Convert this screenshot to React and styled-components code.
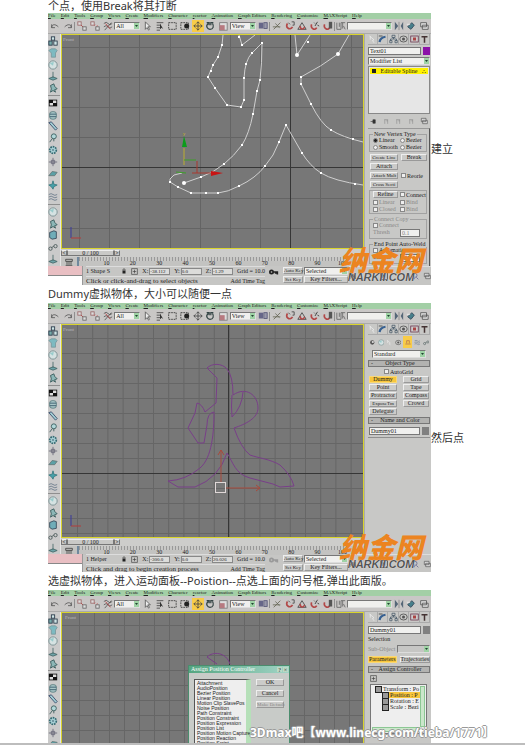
import React from 'react';
import styled, { createGlobalStyle, css } from 'styled-components';

const GlobalStyle = createGlobalStyle`
  * { box-sizing: border-box; }
  body {
    margin: 0;
    background: #fff;
    color: #333;
    font-family: "Noto Sans", "Noto Sans CJK SC", sans-serif;
    font-size: 11px;
  }
  button, input, select {
    font: inherit;
    color: inherit;
    margin: 0;
    padding: 0;
    border: 0;
    border-radius: 0;
    background: none;
    min-width: 0;
  }
`;

// ---------- article ----------

const Page = styled.main`
  overflow: hidden;
  border-bottom: 2px solid #bdbdbd;
`;

const Article = styled.article`
  padding-left: 48px;
`;

const Line = styled.p`
  margin: 0;
  padding-bottom: ${p => (p.$first ? '1px' : '0')};
  line-height: ${p => (p.$first ? '12px' : '18px')};
  white-space: nowrap;
`;

const Row = styled.div`
  display: flex;
  position: relative;
  line-height: 14px;
  height: ${p => p.$crop || 'auto'};
  overflow: ${p => (p.$crop ? 'hidden' : 'visible')};
  align-items: ${p => (p.$crop ? 'flex-start' : 'center')};
`;

const Credit = styled.span`
  position: absolute;
  left: 202px;
  bottom: 3px;
  color: #fff;
  font-size: 12px;
  font-weight: bold;
  white-space: nowrap;
  text-shadow: 1px 0 #999, -1px 0 #999, 0 1px #999, 0 -1px #999;
`;

// ---------- application window ----------

const Window = styled.section`
  position: relative;
  flex: 0 1 383px;
  min-width: 0;
  overflow: hidden;
  background: #c6c6c4;
  color: #222;
  font-family: "Liberation Serif", serif;
  font-size: 6px;
  line-height: 6px;
`;

const MenuBar = styled.nav`
  display: flex;
  gap: 5px;
  height: 6px;
  background: #a3cfa6;
  font-size: 5px;
  overflow: hidden;
  white-space: nowrap;
`;

const MenuItem = styled.button`
  line-height: 6px;
  &::first-letter { text-decoration: underline; }
`;

const ToolBar = styled.div`
  display: flex;
  align-items: center;
  justify-content: space-between;
  height: ${p => p.$height};
  padding: 0 1px;
  border-bottom: 1px solid #aaa;
  background: #c9c7c6;
`;

const ToolButton = styled.button`
  display: flex;
  align-items: center;
  justify-content: center;
  flex: none;
  width: ${p => p.$width || '12px'};
  height: 12px;
  color: ${p => (p.$dim ? '#999' : 'inherit')};
  background: ${p => (p.$on ? '#f8cc48' : 'none')};
`;

const Divider = styled.span`
  flex: none;
  width: ${p => (p.$flat ? 'auto' : '1px')};
  height: ${p => (p.$flat ? '1px' : '9px')};
  background: #8f8f8f;
`;

const DropWrap = styled.span`
  display: flex;
  flex: ${p => (p.$width ? 'none' : '1')};
  width: ${p => p.$width || 'auto'};
  height: 8px;
  min-width: 0;
  border: 1px solid #777;
  border-right-color: #ddd;
  border-bottom-color: #ddd;
  background: ${p => (p.$dim ? '#c6c6c4' : '#f0f0ee')};
`;

const DropSelect = styled.select`
  appearance: none;
  flex: 1;
  padding-left: 1px;
  line-height: 6px;
`;

const DropArrow = styled.svg`
  flex: none;
  width: 5px;
  height: 6px;
  background: #9fd3a5;
`;

const Body = styled.div`
  display: grid;
  grid-template-columns: 13px minmax(0, 1fr) 67px;
  height: ${p => p.$height};
`;

const SideBar = styled.div`
  display: flex;
  flex-direction: column;
  justify-content: space-between;
  padding: 2px 0;
  overflow: hidden;
  border-right: 1px solid #e4e4e4;
  background: #cacaca;
  button { width: 10px; height: 10px; }
`;

const Center = styled.div`
  display: flex;
  flex-direction: column;
  min-width: 0;
`;

const Viewport = styled.div`
  flex: 1;
  min-height: 0;
  border: 1px solid #d9d42c;
  background: #777;
  svg { display: block; width: 100%; height: 100%; }
`;

const TimeSlider = styled.div`
  display: flex;
  height: 8px;
  padding: 1px 0;
  background: #cdcdcb;
`;

const Thumb = styled.button`
  width: ${p => p.$width};
  border: 1px solid #777;
  border-top-color: #eee;
  background: #c9c9c7;
  line-height: 4px;
`;

const Ruler = styled.div`
  display: flex;
  height: 9px;
  background: #c3c3c1;
`;

const RulerKey = styled.button`
  display: flex;
  align-items: center;
  justify-content: center;
  width: 18px;
  border-right: 2px solid #71889d;
`;

const Ticks = styled.div`
  display: grid;
  grid-template-columns: repeat(10, 1fr);
  flex: 0 1 268px;
  padding: 4px 0 0 4px;
  text-align: right;
  line-height: 5px;
  background: repeating-linear-gradient(90deg, #999 0 1px, #c8c8c6 1px 3px) 0 0 / 100% 4px no-repeat;
`;

const StatusBar = styled.footer`
  display: grid;
  grid-template-columns: 34px minmax(0, 1fr) 17px 67px 82px;
  height: ${p => p.$height};
  overflow: hidden;
  white-space: nowrap;
`;

const Listener = styled.div`
  display: grid;
  grid-template-rows: 1fr 1fr;
  gap: 1px;
  background: #888;
  input { width: 100%; background: #fff; }
  input:first-child { background: #e9bfc3; }
`;

const StatusCell = styled.div`
  display: grid;
  grid-template-rows: 1fr 1fr;
  min-width: 0;
  padding-left: 3px;
  border-left: 1px solid #999;
`;

const StatusLine = styled.div`
  display: flex;
  align-items: center;
  gap: 4px;
  min-width: 0;
  border-top: 1px solid #ddd;
`;

const Grow = styled.span`
  flex: 1;
  font-size: ${p => (p.$hint ? '7px' : 'inherit')};
`;

const Coord = styled.label`
  display: flex;
  align-items: center;
  gap: 1px;
  input {
    width: 21px;
    height: 7px;
    border: 1px solid #888;
    background: #dcdcda;
    font-size: 5px;
  }
`;

const KeyCell = styled.div`
  display: grid;
  grid-template-columns: 20px minmax(0, 1fr);
  grid-template-rows: 1fr 1fr;
  gap: 1px;
  padding: 1px;
`;

const Logo = styled.div`
  position: absolute;
  right: 8px;
  bottom: 3px;
  display: flex;
  flex-direction: column;
  color: #ec8420;
  font-family: "Noto Sans CJK SC", sans-serif;
  font-size: 28px;
  font-weight: 900;
  font-style: italic;
  line-height: 27px;
  white-space: nowrap;
`;

const LogoSite = styled.span`
  color: #555;
  font-family: "Liberation Sans", sans-serif;
  font-size: 11px;
  font-weight: bold;
  line-height: 9px;
  text-align: center;
  text-shadow: 0 0 1px #fff;
`;

// ---------- command panel ----------

const Panel = styled.aside`
  display: flex;
  flex-direction: column;
  gap: ${p => p.$gap || '2px'};
  min-width: 0;
  padding: 0 1px 0 3px;
  overflow: hidden;
  border-left: 1px solid #aaa;
  background: #c8c8c6;
`;

const PanelRow = styled.div`
  display: flex;
  align-items: center;
  justify-content: space-between;
  gap: 2px;
  flex: none;
  height: ${p => p.$height || '9px'};
  padding: 0 ${p => p.$inset || '0px'};
`;

const TabRow = styled(PanelRow)`
  gap: 0;
  height: 11px;
  border-bottom: 1px solid #aaa;
  button { width: 10px; height: 10px; border-right: 1px solid #aaa; }
`;

const NameField = styled.input`
  flex: 1;
  width: 20px;
  height: 8px;
  padding-left: 1px;
  border: 1px solid #777;
  background: #f0f0ee;
`;

const Swatch = styled.button`
  width: 7px;
  height: 8px;
  background: ${p => p.$color};
`;

const Stack = styled.div`
  flex: none;
  height: 48px;
  padding: 1px;
  border: 1px solid #888;
  background: #e6e6e6;
`;

const StackItem = styled.button`
  display: flex;
  justify-content: space-between;
  align-items: center;
  width: 100%;
  height: 6px;
  padding: 0 2px;
  background: #fff200;
  line-height: 6px;
  i { width: 4px; height: 4px; background: #222; }
`;

const Rollout = styled.div`
  display: flex;
  flex-direction: column;
  gap: 2px;
  flex: 1;
  min-height: 0;
  padding: 2px 2px 0 1px;
  border-top: 1px solid #999;
  border-right: 1px solid #555;
`;

const Group = styled.fieldset`
  display: grid;
  grid-template-columns: 1fr 1fr;
  gap: 1px 2px;
  flex: none;
  min-width: 0;
  margin: 0;
  padding: 0 1px 1px 3px;
  border: 1px solid #a2a2a2;
  color: ${p => (p.$dim ? '#888' : 'inherit')};
  legend { padding: 0 1px; line-height: 6px; white-space: nowrap; }
`;

const Choice = styled.label`
  display: flex;
  align-items: center;
  gap: 1px;
  min-width: 0;
  white-space: nowrap;
  line-height: 6px;
  grid-column: ${p => (p.$wide ? 'span 2' : 'auto')};
  color: ${p => (p.$dim ? '#888' : 'inherit')};
  input {
    appearance: none;
    flex: none;
    width: 5px;
    height: 5px;
    border: 1px solid #888;
    background: #eee;
  }
  input[type='radio'] { border-radius: 50%; }
  input:checked { background: #222; }
`;

const PushGrid = styled.div`
  display: grid;
  grid-template-columns: 28px 26px;
  justify-content: space-between;
  gap: ${p => p.$gap || '2px 3px'};
  padding: 0 1px;
`;

const pushed = css`
  background: #f8c63c;
  border-color: #f8d878;
`;

const Push = styled.button`
  height: 7px;
  border: 1px solid #999;
  border-top-color: #eee;
  border-left-color: #eee;
  background: #cbcbc9;
  font-size: ${p => (p.$small ? '5px' : '6px')};
  line-height: 5px;
  text-align: center;
  white-space: nowrap;
  ${p => p.$on && pushed}
  &:disabled { color: #888; }
`;

const Header = styled.button`
  display: flex;
  flex: none;
  height: 7px;
  border: 1px solid #777;
  background: #b2b2b0;
  line-height: 5px;
  text-align: center;
  padding: 0 2px;
  span { flex: 1; }
`;

const Tree = styled.ul`
  display: grid;
  grid-template-columns: minmax(0, 1fr) 5px;
  grid-template-rows: repeat(4, 6px) 1fr 5px;
  flex: none;
  height: 50px;
  margin: 0 3px 0 2px;
  padding: 1px;
  border: 1px solid #777;
  background: #eee;
  list-style: none;
`;

const TreeItem = styled.li`
  display: flex;
  align-items: center;
  grid-column: 1;
  margin-left: ${p => (p.$root ? '3px' : '10px')};
  background: ${p => (p.$on ? '#f8c63c' : 'none')};
  white-space: nowrap;
  &::before {
    content: '';
    width: 5px;
    height: 5px;
    margin-right: 1px;
    border: 1px solid #222;
    background: #999;
  }
`;

const Scroll = styled.li`
  grid-column: ${p => (p.$wide ? '1' : '2')};
  grid-row: ${p => (p.$wide ? '6' : '1 / 6')};
  border: 1px solid #8cc794;
  background: #cbe7cb;
`;

// ---------- assign dialog ----------

const Stage = styled.div`
  position: relative;
  display: flex;
  flex: 1;
  min-height: 0;
`;

const Dialog = styled.div`
  position: absolute;
  left: 127px;
  top: 53px;
  width: 102px;
  height: 100px;
  border: 1px solid #4b8d6e;
  background: #c8cbc8;
`;

const DialogTitle = styled.div`
  display: flex;
  justify-content: space-between;
  height: 7px;
  padding: 0 1px 0 2px;
  background: linear-gradient(90deg, #54a681, #a2d4c6);
  color: #fff;
  button { width: 5px; height: 5px; margin: 1px 0 0 1px; background: #bcd9c5; color: #222; line-height: 4px; }
`;

const DialogBody = styled.div`
  display: grid;
  grid-template-columns: 57px 28px;
  gap: 5px;
  padding: 6px 5px;
`;

const ControllerList = styled.ul`
  height: 80px;
  margin: 0;
  padding: 1px 2px;
  border: 1px solid #555;
  border-right: 5px solid #b6e0b9;
  background: #eee;
  font-family: "Liberation Sans", sans-serif;
  font-size: 5px;
  line-height: 5px;
  list-style: none;
  white-space: nowrap;
`;

const DialogButtons = styled.div`
  display: flex;
  flex-direction: column;
  gap: 4px;
`;

// ---------- icons ----------

const art = {
  undo: <path d="M2 8C2 4 6 3 10 7M2 4v4h4" stroke="#555" />,
  redo: <path d="M10 8C10 4 6 3 2 7M10 4v4H6" stroke="#555" />,
  link: <><path d="M4 4l5 5" stroke="#b33" /><rect x="1" y="1" width="4" height="4" fill="#ddd" stroke="#966" /><rect x="7" y="7" width="4" height="4" fill="#ddd" stroke="#666" /></>,
  unlink: <><path d="M5 6l1-2M7 9l2-4" stroke="#c66" /><rect x="1" y="1" width="4" height="4" fill="#ddd" stroke="#966" /><rect x="7" y="7" width="4" height="4" fill="#ddd" stroke="#666" /></>,
  bind: <><path d="M1 3q3-3 5 0t5 0M1 7q3-3 5 0t5 0M2 11l8-9" stroke="#555" /><path d="M3 3l6 7" stroke="#b44" /></>,
  pick: <path d="M4 1v9l2-2 2 3 1-1-2-3h3z" fill="#eee" stroke="#555" />,
  list: <><path d="M2 2h8M2 5h5M2 8h5M2 11h4" stroke="#444" /><path d="M6 3v7l2-2 2 2z" fill="#333" /></>,
  rect: <rect x="2" y="2" width="9" height="8" stroke="#333" strokeDasharray="2 1" />,
  region: <><rect x="1" y="2" width="9" height="8" stroke="#333" strokeDasharray="2 1" /><circle cx="8" cy="6" r="3" fill="#222" /></>,
  move: <path d="M6 1v10M1 6h10M4 3l2-2 2 2M4 9l2 2 2-2M3 4L1 6l2 2M9 4l2 2-2 2" stroke="#444" />,
  rotate: <path d="M4 3C0 6 3 10 6 10C10 10 11 6 9 3M2 2h3v3M7 5V2h3" stroke="#344" strokeWidth="1.500" />,
  scale: <><rect x="2" y="2" width="9" height="9" fill="#ddd" stroke="#777" /><rect x="2" y="5" width="6" height="6" fill="#b77a80" /></>,
  pivot: <><rect x="1" y="2" width="5" height="7" fill="#668" /><rect x="7" y="2" width="4" height="7" fill="#99a" stroke="#557" /></>,
  wand: <path d="M2 10l8-8M4 3l5 5M1 7h9" stroke="#665" />,
  snap: <><path d="M3 3C0 8 6 12 9 7" stroke="#b24848" strokeWidth="2" /><path d="M6 4L4 2M8 1h3v4H9" stroke="#444" /></>,
  angle: <><path d="M1 10L6 2l5 8z" stroke="#444" /><path d="M4 6C3 10 8 11 9 7" stroke="#b24848" strokeWidth="2" /></>,
  percent: <><path d="M2 4C0 9 6 12 8 8" stroke="#b24848" strokeWidth="2" /><path d="M5 2l1 1M9 1L6 6M9 5l2 1" stroke="#333" /></>,
  spin: <><path d="M2 4C0 9 6 12 8 8" stroke="#b24848" strokeWidth="2" /><rect x="7" y="1" width="4" height="8" fill="#555" /></>,
  sets: <path d="M1 2v8h5V2M4 2v5M8 2v7M6 2h5M9 6l2 4" stroke="#666" />,
  mirror: <><path d="M1 1v10l4-5zM11 1v10L8 6z" fill="#567" /><path d="M6 1v10" stroke="#888" /></>,
  align: <><path d="M2 7l5-5 3 3-4 5z" fill="#477f8b" stroke="#345" /><path d="M1 4h4" stroke="#eee" /></>,
  layers: <path d="M2 2h7v5H2zM4 5h7v5H4z" fill="#ddd" stroke="#555" />,
  cubes: <><rect x="4" y="1" width="4" height="4" fill="#cfe5e5" stroke="#234" /><rect x="1" y="6" width="4" height="5" fill="#7aa" stroke="#234" /><rect x="7" y="6" width="4" height="5" fill="#cfe5e5" stroke="#234" /></>,
  shirt: <path d="M1 3l3-2h5l2 2-2 3v5H4V6z" fill="#7dbac1" stroke="#78979b" />,
  ball: <><circle cx="6" cy="6" r="5" fill="#d5e2e2" stroke="#71898c" /><path d="M2 4l5-2-1 5z" fill="#9cc" /></>,
  stand: <path d="M6 1v7M1 9l5-2 5 2-5 2z" fill="#6fa3a8" stroke="#466" />,
  figure: <path d="M3 3l4-2 1 3 3 3-3 1 1 3-3-2-3 2 1-4z" fill="#8cb7b7" stroke="#355" />,
  checks: <><rect x="1" y="2" width="10" height="8" fill="#111" /><rect x="6" y="3" width="4" height="3" fill="#ddd" /><rect x="2" y="6" width="4" height="3" fill="#ddd" /></>,
  coil: <><rect x="2" y="2" width="8" height="9" rx="3" fill="#a8c6c7" stroke="#55797c" /><path d="M2 5h8M2 8h8" stroke="#356" /></>,
  tube: <path d="M1 2l3-1 7 8-2 2z" fill="#a1cdd2" stroke="#346" />,
  lamp: <><circle cx="7" cy="4" r="3" fill="#b1d7d9" stroke="#355" /><path d="M5 7l-3 4M7 7v3" stroke="#355" /></>,
  gear: <><circle cx="6" cy="6" r="4" fill="#a6cfd4" stroke="#356b73" strokeWidth="2" strokeDasharray="2 1" /><circle cx="6" cy="6" r="1" fill="#356" /></>,
  cross: <path d="M6 1v10M1 6h10M4 4h4v4H4z" stroke="#667" />,
  fan: <path d="M1 8l4-5 6 1-3 4z" fill="#5ba0a6" stroke="#677" />,
  star: <path d="M6 1l1 4 4 1-4 2-1 3-2-3-3-2 4-1z" fill="#45a1aa" stroke="#377a80" />,
  waves: <path d="M1 3q3-2 5 0t5 0M1 6q3-2 5 0t5 0M1 9q3-2 5 0t5 0" stroke="#678" />,
  box: <path d="M2 3l5-2 3 1v8l-5 1-3-2z" fill="#6fadb8" stroke="#345" />,
  glasses: <path d="M1 8a2 2 0 1 0 4 0 2 2 0 1 0-4 0M7 5a2 2 0 1 0 4 0 2 2 0 1 0-4 0M4 7l3-2" stroke="#455" />,
  create: <path d="M2 2l6 5-2 1 2 3M3 2v5" stroke="#eee" />,
  modify: <><path d="M2 10Q3 4 10 3" stroke="#376091" strokeWidth="3" /><path d="M1 2h5" stroke="#333" /></>,
  tree: <path d="M4 1h4v3H4zM1 8h3v3H1zM8 8h3v3H8zM6 4v2M2 8V6h8v2" stroke="#456" />,
  wheel: <><ellipse cx="6" cy="6" rx="5" ry="4" stroke="#444" /><circle cx="6" cy="6" r="2" fill="#555" /></>,
  monitor: <><rect x="1" y="2" width="10" height="8" fill="#ccc" stroke="#632b45" /><rect x="4" y="4" width="4" height="4" fill="#a44" /></>,
  hammer: <path d="M2 2h8v2H7v7H5V4H2z" fill="#433" />,
  dot: <><circle cx="6" cy="6" r="4" fill="#555" /><circle cx="7" cy="5" r="2" fill="#ddd" /></>,
  tape: <path d="M2 9h8M4 8V4h4v4" stroke="#a65" />,
  pin: <path d="M1 6h5M5 3v6h4V3z" fill="#333" stroke="#333" />,
  pipe: <path d="M3 2v8M8 2v8M3 3h4v3" stroke="#888" />,
  lock: <><rect x="3" y="5" width="6" height="6" fill="#222" /><path d="M4 5V2h4v3" stroke="#222" /></>,
  plus: <path d="M1 1h10v10H1zM6 3v6M3 6h6" stroke="#333" />,
  key: <><circle cx="3" cy="6" r="2" stroke="currentColor" strokeWidth="2" /><path d="M5 6h6M10 6v3M8 6v2" stroke="currentColor" strokeWidth="2" /></>,
  curve: <><path d="M1 2h10v3H1zM3 5v5M6 5v5M9 5v5" stroke="#222" /><path d="M1 11h10" stroke="#222" /></>,
  back: <path d="M2 2v8M11 2v8L7 6zM7 2v8L3 6z" fill="#333" stroke="#333" />,
  play: <><rect x="1" y="1" width="10" height="10" fill="#bbb" stroke="#333" /><path d="M4 3v6l4-3z" fill="#222" /></>,
  zoom: <><circle cx="6" cy="5" r="3" stroke="#558" /><path d="M8 8l3 3M1 10h5" stroke="#558" /></>,
};

const Icon = ({ name, size = 10 }) => (
  <svg width={size} height={size} viewBox="0 0 12 12" fill="none" aria-hidden="true">{art[name]}</svg>
);

const Tool = ({ name, ...rest }) => (
  <ToolButton aria-label={name} {...rest}><Icon name={name} /></ToolButton>
);

const Drop = ({ label, value, width, dim }) => (
  <DropWrap $width={width} $dim={dim}>
    <DropSelect aria-label={label} defaultValue={value}>
      <option>{value}</option>
    </DropSelect>
    <DropArrow viewBox="0 0 5 6"><path d="M1 2h3L2.500 4z" fill="#243" /></DropArrow>
  </DropWrap>
);

// ---------- viewports ----------

const range = (from, to, step) => {
  const out = [];
  for (let n = from; n < to; n += step) out.push(n);
  return out;
};

const Grid = ({ xs, ys, box, major, minor = '#646464' }) => {
  const [x, y, w, h] = box;
  return (
    <>
      <path d={xs.map(n => `M${n} ${y}v${h}`).join('') + ys.map(n => `M${x} ${n}h${w}`).join('')} stroke={minor} strokeWidth="1" />
      <path d={`M${major[0]} ${y}v${h}` + (major[1] ? `M${x} ${major[1]}h${w}` : '')} stroke="#363636" />
    </>
  );
};

const Tripod = ({ y }) => (
  <g fill="none">
    <path d={`M71 ${y}v-11`} stroke="#3a3a9c" />
    <path d={`M71 ${y}h10`} stroke="#b23c3c" />
  </g>
);

const knots = [
  [222, 45], [218, 57], [213, 65], [211, 71], [208, 77], [215, 88], [227, 105], [241, 107], [244, 100], [244, 78],
  [246, 64], [252, 53], [262, 43], [260, 80], [257, 91], [253, 114], [242, 145], [224, 164], [201, 177], [239, 37],
  [242, 45], [308, 42], [301, 77], [301, 84], [311, 104], [331, 130], [353, 139], [286, 125], [279, 142], [265, 166],
  [239, 186], [218, 193], [206, 193], [191, 193], [178, 187], [170, 182], [302, 153], [321, 173], [355, 184],
];

const SplineScene = () => (
  <svg viewBox="62 35 301 213" preserveAspectRatio="none" fill="none">
    <Grid box={[62, 35, 301, 213]} xs={[79.500, 109.500, 139.500, 170.500, 200.500, 230.500, 260.500, 320.500, 351.500]} ys={[47.500, 77.500, 107.500, 137.500, 198.500, 228.500]} major={[290.500, 167.500]} />
    <text x="63" y="41" fill="#bbb" fontSize="5">Front</text>
    <g stroke="#cfcfcf">
      <path d="M223 35L222 45L218 57L213 65L208 77L215 88L227 105L241 107L244 100L244 78Q245 60 252 53L262 43Q262 64 260 80L257 91L253 114Q249 134 242 145Q234 156 224 164Q213 173 201 177L184 183" />
      <path d="M239 35L242 45L255 35M295 35L297 55L310 35M349 35L338 54Q322 66 301 77V84L311 104Q321 124 331 130Q342 137 363 142" />
      <path d="M363 185Q334 181 321 173Q310 166 302 153L286 125L279 142Q274 156 265 166Q256 178 239 186Q228 192 218 193H191L178 187L170 182V179L174 175L182 173" />
    </g>
    <g fill="#fff">
      {knots.map(([x, y]) => <rect key={x + '-' + y} x={x - 1} y={y - 1} width="2" height="2" />)}
      <circle cx="184" cy="183" r="2" />
      <circle cx="297" cy="55" r="2" />
      <circle cx="338" cy="54" r="2" />
    </g>
    <path d="M184 148v17" stroke="#bdae30" />
    <path d="M184 160h12M176 172l10 1" stroke="#3ca028" />
    <path d="M197 161v12M192 173h20" stroke="#a83a30" />
    <path d="M184 136l3 11h-5z" fill="#0c9c1c" />
    <path d="M223 173l-12-2v5z" fill="#c81414" />
    <text x="183" y="135" fill="#c8b52c" fontSize="5">y</text>
    <Tripod y={238} />
  </svg>
);

const DummyScene = () => (
  <svg viewBox="62 325 301 212" preserveAspectRatio="none" fill="none">
    <Grid box={[62, 325, 301, 212]} xs={range(77.500, 363, 15.200)} ys={range(338.500, 537, 15)} major={[228.500, 473.500]} minor="#666" />
    <text x="63" y="331" fill="#bbb" fontSize="5">Front</text>
    <g stroke="#793f89">
      <path d="M207 368C212 363 222 363 227 369Q233 376 233 395" />
      <path d="M233 395C246 386 258 395 258 408C258 418 246 424 234 428Q241 448 250 455C258 458 270 459 280 465Q291 475 294 486L280 487L273 484L250 478C235 474 233 462 227 453Q219 478 195 487H178L168 481Q186 480 200 468C212 458 214 432 214 412Q207 413 207 425L204 443H198L188 428L195 413L197 403Q202 404 205 412L216 403L217 378L207 368" />
      <path d="M232 395Q231 406 232 417Q242 407 243 392" />
    </g>
    <path d="M221 482v-32M218 455l3-5 3 5M226 488h34M256 485l4 3-4 3" stroke="#a84a3c" />
    <rect x="215.500" y="482.500" width="10" height="10" stroke="#e0d8d8" />
    <Tripod y={526} />
  </svg>
);

const DialogScene = () => (
  <svg viewBox="62 613 301 200" preserveAspectRatio="none" fill="none">
    <Grid box={[62, 613, 301, 200]} xs={range(79.500, 363, 15)} ys={range(625.500, 813, 15)} major={[229.500]} minor="#666" />
    <text x="65" y="619" fill="#bbb" fontSize="5">Front</text>
    <path d="M217 664L207 657C213 651 226 652 230 664" stroke="#793f89" />
  </svg>
);

// ---------- shared window frame ----------

const menus = ['File', 'Edit', 'Tools', 'Group', 'Views', 'Create', 'Modifiers', 'Character', 'reactor', 'Animation', 'Graph Editors', 'Rendering', 'Customize', 'MAXScript', 'Help'];
const sideTools = ['cubes', 'shirt', 'ball', 'stand', 'figure', '-', 'checks', 'coil', 'tube', 'lamp', 'gear', 'cross', 'fan', 'star', 'waves', '-', 'ball', 'figure', 'box', 'glasses', 'stand'];
const tabs = ['create', 'modify', 'tree', 'wheel', 'monitor', 'hammer'];

const Frame = ({ title, coords, hint, bar = '15px', body, foot, moving, keyDim, scene, dialog, children }) => (
  <Window aria-label={title}>
    <MenuBar>{menus.map(m => <MenuItem key={m}>{m}</MenuItem>)}</MenuBar>
    <ToolBar $height={bar}>
      <Tool name="undo" />
      <Tool name="redo" />
      <Divider />
      <Tool name="link" />
      <Tool name="unlink" />
      <Tool name="bind" />
      <Drop label="Selection filter" value="All" width="26px" />
      <Tool name="pick" />
      <Tool name="list" />
      <Tool name="rect" />
      <Tool name="region" />
      <Tool name="move" $on={moving} />
      <Tool name="rotate" />
      <Tool name="scale" />
      <Drop label="Reference" value="View" width="26px" />
      <Tool name="pivot" />
      <Divider />
      <Tool name="wand" />
      <Tool name="snap" />
      <Tool name="angle" />
      <Tool name="percent" />
      <Tool name="spin" />
      <Divider />
      <Tool name="sets" $width="10px" />
      <Drop label="Named sets" value="" width="45px" />
      <Tool name="mirror" />
      <Tool name="align" />
      <Tool name="layers" />
    </ToolBar>
    <Body $height={body}>
      <SideBar>
        {sideTools.map((t, i) => (t === '-' ? <Divider key={i} $flat /> : <Tool key={i} name={t} />))}
      </SideBar>
      <Center>
        <Stage>
          <Viewport>{scene}</Viewport>
          {dialog}
        </Stage>
        <TimeSlider>
          <Thumb $width="6px">&lt;</Thumb>
          <Thumb $width="47px">0 / 100</Thumb>
          <Thumb $width="6px">&gt;</Thumb>
        </TimeSlider>
        <Ruler>
          <RulerKey aria-label="curve"><Icon name="curve" size={8} /></RulerKey>
          <Ticks>{range(10, 101, 10).map(n => <span key={n}>{n}</span>)}</Ticks>
        </Ruler>
      </Center>
      {children}
    </Body>
    {foot && (
      <StatusBar $height={foot}>
        <Listener>
          <input aria-label="Macro recorder" />
          <input aria-label="Listener" />
        </Listener>
        <StatusCell>
          <StatusLine>
            <Grow>{title}</Grow>
            <Icon name="lock" size={6} />
            <Icon name="plus" size={7} />
            {['X', 'Y', 'Z'].map((axis, i) => (
              <Coord key={axis}>{axis}:<input defaultValue={coords[i]} /></Coord>
            ))}
            <span>Grid = 10.0</span>
          </StatusLine>
          <StatusLine>
            <Grow $hint>{hint}</Grow>
            <span>Add Time Tag</span>
          </StatusLine>
        </StatusCell>
        <ToolButton $width="17px" aria-label="key" $dim={keyDim}>
          <Icon name="key" />
        </ToolButton>
        <KeyCell>
          <Push $small>Auto Key</Push>
          <Drop label="Key mode" value="Selected" width="44px" />
          <Push $small>Set Key</Push>
          <Push>Key Filters...</Push>
        </KeyCell>
        <StatusLine>
          <Icon name="back" size={7} />
          <Grow />
          <Icon name="play" size={8} />
          <Grow />
          <Icon name="zoom" size={8} />
          <Icon name="layers" size={8} />
        </StatusLine>
      </StatusBar>
    )}
    {foot && <Logo>纳金网<LogoSite>NARKII.COM</LogoSite></Logo>}
  </Window>
);

const Tabs = () => (
  <TabRow>{tabs.map(t => <Tool key={t} name={t} />)}</TabRow>
);

const Check = ({ children, type = 'checkbox', dim, wide, ...rest }) => (
  <Choice $dim={dim} $wide={wide}><input type={type} {...rest} />{children}</Choice>
);

const ModifyPanel = () => (
  <Panel $gap="1px">
    <Tabs />
    <PanelRow>
      <NameField aria-label="Name" defaultValue="Text01" />
      <Swatch aria-label="Color" $color="#8b12a8" />
    </PanelRow>
    <PanelRow><Drop label="Modifier" value="Modifier List" /></PanelRow>
    <Stack>
      <StackItem><i />Editable Spline<span>∴</span></StackItem>
    </Stack>
    <PanelRow $height="12px" $inset="2px">
      <Icon name="pin" size={7} />
      <Icon name="pipe" size={7} />
      <Icon name="pipe" size={7} />
      <Icon name="pipe" size={7} />
      <Icon name="layers" size={8} />
    </PanelRow>
    <Rollout>
      <Group>
        <legend>New Vertex Type</legend>
        <Check type="radio" name="vertex" defaultChecked>Linear</Check>
        <Check type="radio" name="vertex">Bezier</Check>
        <Check type="radio" name="vertex">Smooth</Check>
        <Check type="radio" name="vertex">Bezier</Check>
      </Group>
      <PushGrid>
        <Push $small>Create Line</Push>
        <Push>Break</Push>
        <Push>Attach</Push>
        <span />
        <Push $small>Attach Mult</Push>
        <Check>Reorie</Check>
        <Push $small>Cross Secti</Push>
      </PushGrid>
      <Group>
        <Push>Refine</Push>
        <Check>Connect</Check>
        <Check dim>Linear</Check>
        <Check dim>Bind</Check>
        <Check dim>Closed</Check>
        <Check dim>Bind</Check>
      </Group>
      <Group $dim>
        <legend>Connect Copy</legend>
        <Check wide>Connect</Check>
        <label htmlFor="copy">Thresh</label>
        <NameField id="copy" defaultValue="0.1" />
      </Group>
      <Group>
        <legend>End Point Auto-Weld</legend>
        <Check wide>Automatic</Check>
        <label htmlFor="weld">Thresh</label>
        <NameField id="weld" defaultValue="6.0" />
      </Group>
    </Rollout>
  </Panel>
);

const CreatePanel = () => (
  <Panel>
    <Tabs />
    <PanelRow $height="10px" $inset="1px">
      {['dot', 'ball', 'create', 'wheel'].map(n => <Icon key={n} name={n} size={7} />)}
      <ToolButton $on $width="9px" aria-label="tape"><Icon name="tape" size={8} /></ToolButton>
      {['waves', 'glasses'].map(n => <Icon key={n} name={n} size={7} />)}
    </PanelRow>
    <PanelRow $inset="4px"><Drop label="Category" value="Standard" /></PanelRow>
    <Header>-<span>Object Type</span></Header>
    <PanelRow $height="5px" $inset="16px"><Check>AutoGrid</Check></PanelRow>
    <PushGrid $gap="1px 3px">
      <Push $on>Dummy</Push>
      <Push>Grid</Push>
      <Push>Point</Push>
      <Push>Tape</Push>
      <Push>Protractor</Push>
      <Push>Compass</Push>
      <Push $small>ExposeTm</Push>
      <Push>Crowd</Push>
      <Push>Delegate</Push>
    </PushGrid>
    <Header>-<span>Name and Color</span></Header>
    <PanelRow $inset="1px">
      <NameField aria-label="Name" defaultValue="Dummy01" />
      <Swatch aria-label="Color" $color="#808080" />
    </PanelRow>
    <Divider $flat />
  </Panel>
);

const MotionPanel = () => (
  <Panel>
    <Tabs />
    <PanelRow>
      <NameField aria-label="Name" defaultValue="Dummy01" />
      <Swatch aria-label="Color" $color="#808080" />
    </PanelRow>
    <PanelRow $height="6px">Selection</PanelRow>
    <PanelRow><Choice $dim>Sub-Object</Choice><Drop label="Sub-Object" value="" dim /></PanelRow>
    <PanelRow>
      <Push $on>Parameters</Push>
      <Push>Trajectories</Push>
    </PanelRow>
    <Header>-<span>Assign Controller</span></Header>
    <PanelRow $height="7px" $inset="2px"><Icon name="plus" size={7} /></PanelRow>
    <Tree>
      <TreeItem $root>Transform : Po</TreeItem>
      <TreeItem $on>Position : P</TreeItem>
      <TreeItem>Rotation : E</TreeItem>
      <TreeItem>Scale : Bezi</TreeItem>
      <Scroll />
      <Scroll $wide />
    </Tree>
  </Panel>
);

const controllers = [
  'Attachment', 'AudioPosition', 'Bezier Position', 'Linear Position', 'Motion Clip SlavePos', 'Noise Position',
  'Path Constraint', 'Position Constraint', 'Position Expression', 'Position List', 'Position Motion Capture',
  'Position Reaction', 'Position Script',
];

const AssignDialog = () => (
  <Dialog role="dialog">
    <DialogTitle>
      <span>Assign Position Controller</span>
      <div><button>?</button><button>×</button></div>
    </DialogTitle>
    <DialogBody>
      <ControllerList>{controllers.map(c => <li key={c}>{c}</li>)}</ControllerList>
      <DialogButtons>
        <Push>OK</Push>
        <Push>Cancel</Push>
        <Push $small disabled>Make Default</Push>
      </DialogButtons>
    </DialogBody>
  </Dialog>
);

const App = () => (
  <>
    <GlobalStyle />
    <Page>
      <Article>
        <Line $first>个点，使用Break将其打断</Line>
        <Row>
          <Frame title="1 Shape S" coords={['-38.112', '0.0', '-1.29']} hint="Click or click-and-drag to select objects" body="232px" foot="19px" moving scene={<SplineScene />}>
            <ModifyPanel />
          </Frame>
          <span>建立</span>
        </Row>
        <Line>Dummy虚拟物体，大小可以随便一点</Line>
        <Row>
          <Frame title="1 Helper" coords={['-300.0', '0.0', '20.026']} hint="Click and drag to begin creation process" body="230px" foot="18px" keyDim scene={<DummyScene />}>
            <CreatePanel />
          </Frame>
          <span>然后点</span>
        </Row>
        <Line>选虚拟物体，进入运动面板--Poistion--点选上面的问号框,弹出此面版。</Line>
        <Row $crop="153px">
          <Frame title="Motion" bar="16px" body="219px" moving scene={<DialogScene />} dialog={<AssignDialog />}>
            <MotionPanel />
          </Frame>
          <Credit>3Dmax吧【www.linecg.com/tieba/1771】</Credit>
        </Row>
      </Article>
    </Page>
  </>
);

export default App;
